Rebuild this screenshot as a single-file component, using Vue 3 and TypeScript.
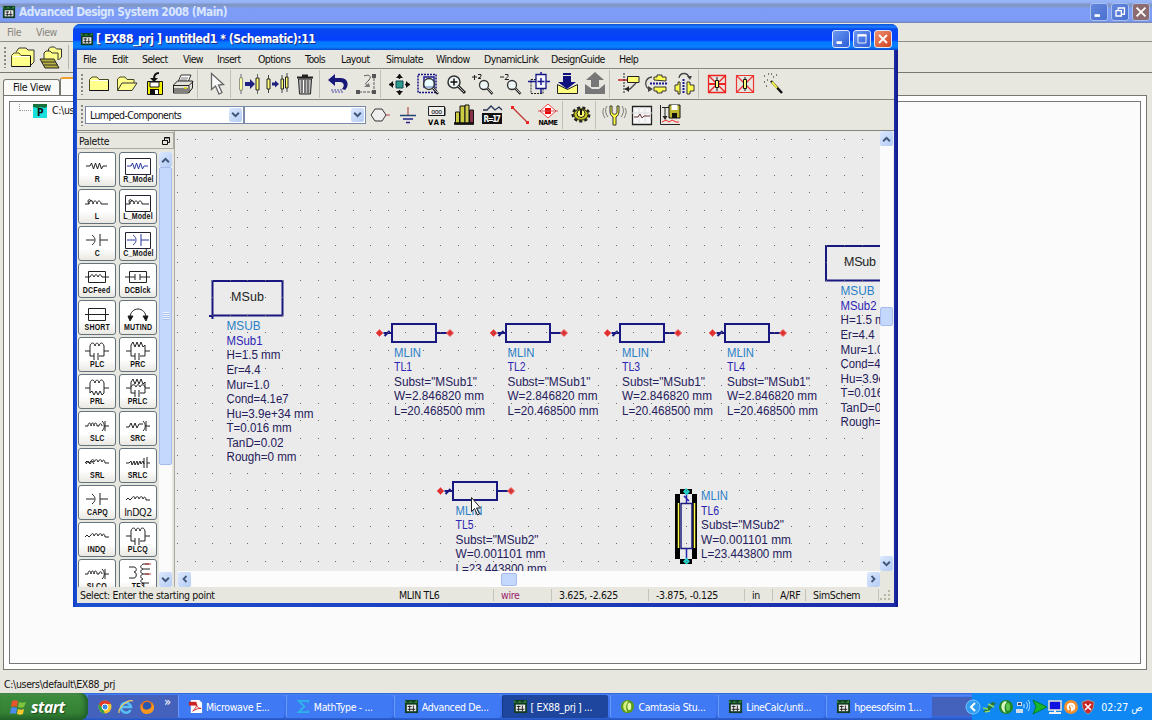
<script setup lang="ts">
import { computed } from "vue";

defineOptions({ name: "SchematicDesktop" });

interface Mlin {
    name: string;
    x: number;
    y: number;
    textX: number;
    textY: number;
    subst: string;
    w: string;
    l: string;
}

interface TextLine {
    text: string;
    width: number;
    kind: "type" | "id" | "param";
}

const FOLDER = '<path d="M4.5 20.5V9.5L7 7h5l2 2.5h9.5v11z" fill="#ffff8c" stroke="#4a4a20"/><path d="M6 10.5h17" stroke="#fff"/><path d="M4.5 20.5h19V10" fill="none" stroke="#111"/>';
const GLASS = '<circle cx="13" cy="12" r="6" fill="#eef6f6" stroke="#333" stroke-width="1.5"/><path d="M17 16l7 7" stroke="#222" stroke-width="3"/><path d="M17 16l6 6" stroke="#bbb"/>';
const SMALL_GLASS = '<circle cx="15" cy="15" r="4.5" fill="#eef6f6" stroke="#333" stroke-width="1.3"/><path d="M18.500 18.500l5 5.500" stroke="#222" stroke-width="2.500"/><path d="M18.500 18.500l5 5" stroke="#bbb"/>';
const FLOPPY = '<path d="M6.500 11.500h15v13h-15z" fill="#f4f000" stroke="#111"/><path d="M9 12h9v5H9z" fill="#fff" stroke="#111"/><path d="M9 19h9v5H9z" fill="#111"/><path d="M14 20h3v4h-3z" fill="#fff"/>';

const icons: Record<string, string> = {
    folder: FOLDER,
    folderOpen: '<path d="M4.500 20.500V9L7 7h5l2 2.500h7V13" fill="#ffff8c" stroke="#4a4a20"/><path d="M4.500 20.500L9 13h15l-5 7.500z" fill="#ffff8c" stroke="#333"/>',
    save: FLOPPY + '<path d="M18 3c-4 0-5 2-5 6" fill="none" stroke="#111" stroke-width="2"/><path d="M9 8h8l-4 4z" fill="#111"/>',
    print: '<path d="M9 12l3-7h10l-3 7z" fill="#fff" stroke="#333"/><path d="M12 8h7M11 10h7" stroke="#777"/><path d="M4.500 15l4-4h15v7l-4 5h-15z" fill="#e3e0d8" stroke="#222"/><path d="M4 15.500h16l4-4M20 15.500V23M5 19h14M5 21h14" fill="none" stroke="#222"/><path d="M15 18h3" stroke="#dd0" stroke-width="1.500"/>',
    select: '<path d="M9.500 3.500v16l4-3.500 3.500 8 3-1.500-3.500-7.500 5-.5z" fill="#fafafa" stroke="#666" stroke-width="1.300"/>',
    stepOne: '<path d="M4.500 8h3v12h-3z" fill="#ffffa0" stroke="#998"/><path d="M21 8h3v12h-3z" fill="#ffff70" stroke="#222"/><path d="M22.500 4v4M22.500 20v4M6 4v4M6 20v4" stroke="#666"/><path d="M10 12h5v-3l5 5-5 5v-3h-5z" fill="#202080"/>',
    stepMany: '<path d="M4 9h3v10H4zM18 9h2.500v10H18zM22.500 7h2.500v11h-2.500z" fill="#ffff70" stroke="#222"/><path d="M5.500 5v4M5.500 19v4M19 5v4M19 19v4M24 3v4M24 18v4" stroke="#444"/><path d="M9 12.500h3v-2l4 3.500-4 3.500v-2H9z" fill="#202080"/>',
    trash: '<path d="M7.500 9h13l-1 15h-11z" fill="#bbb" stroke="#222"/><path d="M6 7.500h16M11 5.500h6" stroke="#222" stroke-width="2"/><path d="M11 10v13M14 10v13M17 10v13" stroke="#333"/><path d="M12.500 10v13" stroke="#fff"/>',
    undo: '<path d="M4 10l7-6v4h6c8 0 8 9 4 12l-3-1c3-3 2-7-2-7h-5v4z" fill="#181878"/><path d="M7 20h12M8 22h11" stroke="#7c7cb8" stroke-width="1.300" stroke-dasharray="2 1"/>',
    reroute: '<path d="M7 22h13M22 8v12" stroke="#888" stroke-width="1.500" stroke-dasharray="3 1"/><path d="M4 20h4v4H4zM20 20h4v4h-4zM20 4h4v4h-4z" fill="#555"/><path d="M12 6c5-2 8 0 5 4-3 3-5 4-1 6" fill="none" stroke="#555"/><path d="M12 17h6l-1-4z" fill="#777"/>',
    viewAll: '<path d="M11 11h7v7h-7z" fill="#2c9c8c" stroke="#145"/><path d="M11 8h7l-3.500-4zM11 21h7l-3.500 4zM8 11v7l-4-3.500zM21 11v7l4-3.500z" fill="#111"/><path d="M14.500 4v5M14.500 20v5M4 14.500h5M20 14.500h5" stroke="#111" stroke-width="1.500"/>',
    zoomArea: '<path d="M5 4.500h18v18H5z" fill="none" stroke="#161680" stroke-width="1.500" stroke-dasharray="2 1"/><path d="M11 7h10v10H11z" fill="#fff" stroke="#181890" stroke-width="1.500"/><circle cx="16" cy="14" r="5.500" fill="#dff" fill-opacity=".6" stroke="#333" stroke-width="1.300"/><path d="M20 18l5 6" stroke="#222" stroke-width="2.500"/><path d="M20 18l5 5" stroke="#bbb"/>',
    zoomPoint: GLASS + '<path d="M9.500 12h7M13 8.500v7" stroke="#111" stroke-width="1.500"/>',
    zoomIn: SMALL_GLASS + '<path d="M3 7h5M5.500 5v5M9 4.500h3v2l-3 2h3" fill="none" stroke="#222"/>',
    zoomOut: SMALL_GLASS + '<path d="M3 7h4M8 4.500h3v2l-3 3h4" fill="none" stroke="#222"/>',
    pan: '<path d="M6 9.500h12v14H6z" fill="none" stroke="#222" stroke-dasharray="2 1"/><path d="M11 4.500h10v14H11z" fill="#f8f8ff" stroke="#161680" stroke-width="1.300"/><path d="M16 8v7M12.500 11.500h7M3 11.500h8M21 11.500h4M16 2v3M16 19v4" stroke="#181890" stroke-width="1.500"/>',
    push: '<path d="M4.500 14.500l10 5 10-5v9h-20z" fill="#ffff80" stroke="#222"/><path d="M10 3h8v2h-8zM10 6h8v6h5l-9 7-9-7h5z" fill="#10107c"/>',
    pop: '<path d="M4 14l7 5h7l6-5v10H4z" fill="#777"/><path d="M14 2l9 8h-5v7h-8v-7H5z" fill="#777"/>',
    axes: '<path d="M4 10h10" stroke="#c22" stroke-width="1.300"/><path d="M10 3v21" stroke="#222" stroke-dasharray="2 1"/><path d="M13.500 6.500H25v6H13.500z" fill="#ffff70" stroke="#222"/><path d="M11 19h5l6-6" fill="none" stroke="#444" stroke-width="1.300"/><path d="M15 16l-4 3 4 3z" fill="#222"/>',
    mirrorX: '<path d="M12 10V7h3V5h5v2h4v4zM12 17v4h3v2h5v-2h4v-4z" fill="#ffff50" stroke="#333"/><path d="M8 13.500h17" stroke="#181890" stroke-width="2" stroke-dasharray="2 1"/><path d="M10 7c-8 1-8 11-2 12" fill="none" stroke="#444" stroke-width="1.300"/><path d="M6 16l5 3-5 3z" fill="#444"/>',
    mirrorY: '<path d="M10 12v12H8v-3H5v-6h3v-3zM17 12v12h3v-3h4v-6h-4v-3z" fill="#ffff50" stroke="#333"/><path d="M13.500 9v15" stroke="#181890" stroke-width="2" stroke-dasharray="2 1"/><path d="M9 8c1-6 9-6 10 0" fill="none" stroke="#444" stroke-width="1.300"/><path d="M17 6h5l-2 4z" fill="#444"/>',
    deactivate: '<path d="M5.500 5.500h17v17h-17zM5.500 5.500l17 17M22.500 5.500l-17 17" fill="none" stroke="#e22" stroke-width="1.300"/><path d="M5 14h18" stroke="#e22" stroke-width="2"/><path d="M12.500 10.500h3v7h-3z" fill="#ffff80" stroke="#111"/><path d="M14 7v3M14 18v3" stroke="#111"/>',
    shortOut: '<path d="M5.500 5.500h17v17h-17zM5.500 5.500l17 17M22.500 5.500l-17 17" fill="none" stroke="#e33" stroke-width="1.200"/><path d="M12.500 9.500h3v9h-3z" fill="#ffff80" stroke="#111"/><path d="M14 7v3M14 18v3" stroke="#111"/>',
    wand: '<path d="M12 11l11 12" stroke="#111" stroke-width="2.500"/><path d="M13 12l5 6" stroke="#ee4" stroke-width="2"/><path d="M5 6h1M9 4h1M14 7h1M5 12h1M8 10h1M7 16h1M12 4h1M17 5h1" stroke="#555" stroke-width="1.500"/>',
    port: '<path d="M5 14l4-6h7l4 6-4 6H9z" fill="#eee" stroke="#333"/><path d="M20 14h4" stroke="#b44"/>',
    ground: '<path d="M14 6v8" stroke="#a33"/><path d="M6 14.500h16" stroke="#247" stroke-width="1.500"/><path d="M9 18h10M12 21.500h4" stroke="#228" stroke-width="1.500"/>',
    variable: '<path d="M6.500 5.500h16v9h-16z" fill="#eee" stroke="#222"/><path d="M8 14.500h15v-8" fill="none" stroke="#111"/><text x="14.500" y="12.500" font-size="7" text-anchor="middle">ooo</text><text x="14.500" y="24" font-size="7.500" font-weight="bold" text-anchor="middle" textLength="17">VAR</text>',
    library: '<path d="M5.500 11h4v12h-4zM10 5h5v18h-5z" fill="#cccc40" stroke="#111"/><path d="M15 4h4v19h-4z" fill="#cccc50" stroke="#111"/><path d="M19.500 9h4v14h-4z" fill="#883048" stroke="#111"/><path d="M4 22.500h20" stroke="#111" stroke-width="2.500"/>',
    tuneVar: '<path d="M5 9h4l4-4 4 4 4-3 3 3" fill="none" stroke="#235" stroke-width="1.300"/><path d="M4 12h20v11H4z" fill="#111"/><text x="14" y="21" font-size="8" fill="#fff" font-weight="bold" text-anchor="middle" textLength="17">R=17</text>',
    wire: '<path d="M7 7l14 14" stroke="#b33" stroke-width="1.200"/><path d="M5 5h3v3H5zM20 20h3v3h-3z" fill="#e22"/>',
    wireName: '<path d="M14 3l8 7-8 7-8-7z" fill="#fff" stroke="#e44"/><path d="M11 7h6v6h-6z" fill="#e00"/><path d="M4 10h20" stroke="#c55"/><text x="14" y="24" font-size="7" font-weight="bold" text-anchor="middle" textLength="19">NAME</text>',
    simulate: '<ellipse cx="14" cy="13.500" rx="8" ry="6.500" fill="#c4c400" stroke="#222" stroke-width="3" stroke-dasharray="3 2"/><ellipse cx="14" cy="13.500" rx="7" ry="5.500" fill="#c4c420" stroke="#333"/><circle cx="14" cy="12.500" r="4" fill="#ffff70" stroke="#222"/><path d="M14 8v6" stroke="#111" stroke-width="2"/>',
    tune: '<path d="M10 5v5c0 3 1 5 3 6v8h3v-8c2-1 3-3 3-6V5h-2v6c0 3-5 3-5 0V5z" fill="#ffff40" stroke="#333"/><path d="M7 5c-2 3-2 7 1 11M4 7c-2 3-1 7 1 10M22 5c2 3 2 7-1 11M25 7c2 3 1 7-1 10" fill="none" stroke="#777"/>',
    display: '<path d="M4.500 5.500h19v18h-19z" fill="#f6f6f6" stroke="#222" stroke-width="1.300"/><path d="M4 12h20M11 6v17M17 6v17" stroke="#ddd"/><path d="M6 16h4l2-3 2 4 2-2h6" fill="none" stroke="#633"/>',
    dataSave: '<path d="M4.500 4v19.500H24" fill="none" stroke="#222"/><path d="M6 6.500h8M9 7v10" stroke="#222"/><path d="M6.500 15h5l-2.500 4z" fill="#222"/><path d="M13 4h11v13H13z" fill="#bdb830" stroke="#111"/><path d="M15.500 4h6v5h-6z" fill="#fff"/><path d="M16 12h5v5h-5z" fill="#111"/><path d="M6 21l4-2 3 2 3-2 4 2h3" fill="none" stroke="#e22"/>',
};

const toolbar: string[][] = [
    ["folder", "folderOpen", "save", "print"],
    ["select"],
    ["stepOne", "stepMany", "trash"],
    ["undo", "reroute"],
    ["viewAll", "zoomArea", "zoomPoint", "zoomIn", "zoomOut", "pan", "push", "pop"],
    ["axes", "mirrorX", "mirrorY"],
    ["deactivate", "shortOut", "wand"],
];

const insertBar: string[][] = [
    ["port", "ground", "variable", "library", "tuneVar", "wire", "wireName"],
    ["simulate"],
    ["tune", "display", "dataSave"],
];

const menus = ["File", "Edit", "Select", "View", "Insert", "Options", "Tools", "Layout", "Simulate", "Window", "DynamicLink", "DesignGuide", "Help"];

// palette glyphs, drawn on a 34x22 box with the centre line at y=11
const ZIG = '<path d="M6 11h4l1.500-3 2 6 2-6 2 6 2-6 2 6 1.500-3h4"/>';
const COIL = '<path d="M5 12h4c0-5 4-5 4 0 0-4 4-4 4 0 0-4 4-4 4 0h7"/><path d="M9 12c-3-5 2-6 2-2"/>';
const CAP = '<path d="M6 11h8M12 6c4 3 4 7 0 10M20 5v12M20 11h8"/>';
const TANK = '<path d="M5 11h5M24 11h5M10 6v10h4M24 6v10h-5M14 13v7M18 13v7M10 6c1-4 4-4 5 0 1-4 3-4 4 0 1-4 4-4 5 0"/>';
const RTANK = '<path d="M5 11h5M24 11h5M10 5v11h4M24 5v11h-5M14 13v7M18 13v7M10 5l2-3 2 5 2-5 2 5 2-5 2 5 2-2"/>';
const SERIES = '<path d="M5 12h3c0-4 3-4 3 0 0-4 3-4 3 0 0-4 3-4 3 0h2c0-3 3-3 3 0M22 7c3 3 3 7 0 10M25 7v10M25 12h4"/>';
const WAVE = '<path d="M5 12l2-2 2 2 2-2c1-2 3-2 3 1 1-3 4-3 4 0 1-3 4-3 4 0 1-3 3-2 3 1h4"/>';
const BOX = '<path d="M4.500 3.500h25v16h-25z" stroke="#223"/>';

const palette = [
    { label: "R", glyph: ZIG },
    { label: "R_Model", glyph: BOX + ZIG, blue: true },
    { label: "L", glyph: COIL },
    { label: "L_Model", glyph: BOX + COIL },
    { label: "C", glyph: CAP },
    { label: "C_Model", glyph: BOX + CAP, blue: true },
    { label: "DCFeed", glyph: '<path d="M8.500 5.500h17v11h-17zM5 11h5c1-3 3-3 4 0 1-3 3-3 4 0 1-3 3-3 4 0h7"/>' },
    { label: "DCBlck", glyph: '<path d="M8.500 5.500h17v11h-17zM4 11h10M14 8v6M19 8v6M19 11h10"/>' },
    { label: "SHORT", glyph: '<path d="M8.500 5.500h17v12h-17zM5 11.500h24"/>' },
    { label: "MUTIND", glyph: '<path d="M9 15c0-12 16-12 16 0"/><path d="M7 13h5l-3 5zM22 13h5l-2 5z" fill="#111"/>' },
    { label: "PLC", glyph: TANK },
    { label: "PRC", glyph: RTANK },
    { label: "PRL", glyph: '<path d="M5 11h5M24 11h5M10 6v10M24 6v10M10 6c1-4 4-4 5 0 1-4 3-4 4 0 1-4 4-4 5 0M10 16l2-2 2 4 2-4 2 4 2-4 2 4 2-2"/>' },
    { label: "PRLC", glyph: RTANK + '<path d="M10 10c1-3 4-3 5 0 1-3 3-3 4 0 1-3 4-3 5 0"/>' },
    { label: "SLC", glyph: SERIES },
    { label: "SRC", glyph: '<path d="M5 13h3l2-4 2 5 2-5 2 5 2-4h4M22 7c3 3 3 7 0 10M25 7v10M25 12h4"/>' },
    { label: "SRL", glyph: WAVE + '<path d="M6 13l2-3 2 3 2-3 2 3"/>' },
    { label: "SRLC", glyph: '<path d="M5 12h3l2-2 1 4 2-4 1 4 2-4 1 4 2-4 1 3 2-3 1 3M23 7v10M26 6v11M26 12h3"/>' },
    { label: "CAPQ", glyph: CAP },
    { label: "InDQ2", glyph: WAVE, plain: true },
    { label: "INDQ", glyph: WAVE },
    { label: "PLCQ", glyph: TANK },
    { label: "SLCQ", glyph: SERIES },
    { label: "TF3", glyph: '<path d="M8 5h5c3 0 3 5 0 5 3 0 3 6 0 6H8M28 2h-6c-3 2-3 4 0 5-3 1-3 4 0 5-3 1-3 4 0 5-3 1-3 3 0 4h6M22 7h7M22 12h6"/><path d="M24 2h6M24 12h6" stroke="#b33"/>' },
];

// schematic grid
const GRID_STEP = 17.55;
const gridDots = computed(() => {
    let d = "";
    for (let row = 0; row < 25; row++) {
        for (let col = 0; col < 40; col++) {
            d += `M${Math.round(177.1 + col * GRID_STEP)} ${Math.round(139.4 + row * GRID_STEP)}h1v1h-1z`;
        }
    }
    return d;
});

const lines: Mlin[] = [
    { name: "TL1", x: 379.5, y: 333, textX: 394, textY: 356.5, subst: "MSub1", w: "2.846820", l: "20.468500" },
    { name: "TL2", x: 493.5, y: 333, textX: 507.5, textY: 356.5, subst: "MSub1", w: "2.846820", l: "20.468500" },
    { name: "TL3", x: 607.5, y: 333, textX: 622, textY: 356.5, subst: "MSub1", w: "2.846820", l: "20.468500" },
    { name: "TL4", x: 712.5, y: 333, textX: 727, textY: 356.5, subst: "MSub1", w: "2.846820", l: "20.468500" },
    { name: "TL5", x: 440.5, y: 491, textX: 455.5, textY: 514.5, subst: "MSub2", w: "0.001101", l: "23.443800" },
    { name: "TL6", x: 0, y: 0, textX: 701, textY: 500, subst: "MSub2", w: "0.001101", l: "23.443800" },
];

const horizontalLines = computed(() => lines.filter((line) => line.x > 0));

function mlinText(line: Mlin): TextLine[] {
    return [
        { text: "MLIN", width: 27, kind: "type" },
        { text: line.name, width: 18, kind: "id" },
        { text: `Subst="${line.subst}"`, width: 83, kind: "param" },
        { text: `W=${line.w} mm`, width: 90, kind: "param" },
        { text: `L=${line.l} mm`, width: 91, kind: "param" },
    ];
}

function msubText(name: string): TextLine[] {
    return [
        { text: "MSUB", width: 34, kind: "type" },
        { text: name, width: 36, kind: "id" },
        { text: "H=1.5 mm", width: 54, kind: "param" },
        { text: "Er=4.4", width: 34, kind: "param" },
        { text: "Mur=1.0", width: 43, kind: "param" },
        { text: "Cond=4.1e7", width: 62, kind: "param" },
        { text: "Hu=3.9e+34 mm", width: 87, kind: "param" },
        { text: "T=0.016 mm", width: 65, kind: "param" },
        { text: "TanD=0.02", width: 57, kind: "param" },
        { text: "Rough=0 mm", width: 70, kind: "param" },
    ];
}

const textBlocks = computed(() => [
    { x: 226.5, y: 330.2, rows: msubText("MSub1") },
    { x: 840.5, y: 295.2, rows: msubText("MSub2") },
    ...lines.map((line) => ({ x: line.textX, y: line.textY, rows: mlinText(line) })),
]);

const ADS = '<path d="M1 1h14v14H1z" fill="#123c24"/><path d="M1 1l3 3 3-2 3 2 4-3v3H1z" fill="#2f8c3c"/><path d="M3 6h10v7H3z" fill="#e8e8e8"/><path d="M4 8h4M4 11h8M6 7v6M10 7v6" stroke="#222"/>';

const tasks = [
    { label: "Microwave E...", icon: '<path d="M3 1h9l3 3v11H3z" fill="#fff"/><path d="M1 3h8v4H1z" fill="#c22"/><path d="M5 13c3-3 5-6 4-8 0 4 3 5 5 5-4 0-6 1-9 3z" fill="none" stroke="#c22"/>' },
    { label: "MathType - ...", icon: '<path d="M13 4V2H3l6 6-6 6h10v-2" fill="none" stroke="#2fb4ea" stroke-width="2"/>' },
    { label: "Advanced De...", icon: ADS },
    { label: "[ EX88_prj ] ...", icon: ADS, active: true },
    { label: "Camtasia Stu...", icon: '<circle cx="8" cy="8" r="7" fill="#5a9c18"/><path d="M7 2c-5 2-5 10 1 12-2-4-2-8 1-11z" fill="#d8f080"/><ellipse cx="10" cy="8" rx="2" ry="4" fill="#e8f8b0"/>' },
    { label: "LineCalc/unti...", icon: ADS },
    { label: "hpeesofsim 1...", icon: ADS },
];
</script>

<template>
    <div class="desktop">
        <!-- main project window -->
        <section class="main-window">
            <header class="main-title">
                <svg class="app-icon" viewBox="0 0 16 16" v-html="ADS" />
                <span class="main-title-text">Advanced Design System 2008 (Main)</span>
                <div class="window-buttons faded">
                    <i class="wb"><svg viewBox="0 0 18 18"><path d="M4 13h6" stroke="#fff" stroke-width="3" /></svg></i>
                    <i class="wb"><svg viewBox="0 0 18 18"><path d="M7 7V4.500h7v7h-3M4.500 7.500h6v6h-6z" fill="none" stroke="#fff" stroke-width="1.500" /></svg></i>
                    <i class="wb close"><svg viewBox="0 0 18 18"><path d="M4 4l10 10M14 4L4 14" stroke="#fff" stroke-width="2" /></svg></i>
                </div>
            </header>
            <nav class="main-menu"><span>File</span><span>View</span></nav>
            <div class="main-tools">
                <i class="grip" />
                <svg viewBox="0 0 28 28"><g transform="translate(1 -1)"><path d="M7 10l3-4h7l2 2h6v12l-3 3" fill="#ffff8c" stroke="#333" /></g><g transform="translate(-1 3)" v-html="FOLDER" /></svg>
                <svg viewBox="0 0 28 28"><path d="M12.500 11V6l2-2h4l2 2h5v8l-3 3" fill="#ffff8c" stroke="#333" /><path d="M8 17v-7l2-2h4l2 2h6v7" fill="#ffff8c" stroke="#333" /><path d="M4 16h14l5 9H9z" fill="#b8b040" stroke="#222" /><path d="M6 19h14M8 22h14" stroke="#333" /></svg>
                <i class="sep" />
            </div>
            <div class="tabs"><span class="tab">File View</span><span class="tab selected" /></div>
            <div class="main-panel">
                <div class="tree">
                    <i class="tree-line" />
                    <span class="tree-icon"><svg viewBox="0 0 14 14"><path d="M0 0h14v14H0z" fill="#19e0dc" /><path d="M0 0h14v3l-3 1-3-1-3 1-5-1z" fill="#18703c" /></svg><b>P</b></span>
                    <span>C:\users</span>
                </div>
            </div>
            <footer class="main-status">C:\users\default\EX88_prj</footer>
        </section>

        <!-- schematic window -->
        <section class="schematic">
            <header class="title">
                <svg class="app-icon" viewBox="0 0 16 16" v-html="ADS" />
                <span class="title-text">[ EX88_prj ] untitled1 * (Schematic):11</span>
                <div class="window-buttons">
                    <i class="wb"><svg viewBox="0 0 18 18"><path d="M4 13h6" stroke="#fff" stroke-width="3" /></svg></i>
                    <i class="wb"><svg viewBox="0 0 18 18"><path d="M4.500 4.500h9v9h-9z" fill="none" stroke="#fff" /><path d="M4 5h10" stroke="#fff" stroke-width="2.500" /></svg></i>
                    <i class="wb close"><svg viewBox="0 0 18 18"><path d="M4.500 4.500l9 9M13.500 4.500l-9 9" stroke="#fff" stroke-width="2" /></svg></i>
                </div>
            </header>
            <div class="body">
                <nav class="menu"><span v-for="item in menus" :key="item">{{ item }}</span></nav>
                <div class="tools">
                    <i class="grip" />
                    <div v-for="(group, g) in toolbar" :key="g" class="group">
                        <svg v-for="name in group" :key="name" viewBox="0 0 28 28" v-html="icons[name]" />
                    </div>
                </div>
                <div class="tools">
                    <i class="grip" />
                    <div class="combo wide"><span>Lumped-Components</span><i class="drop"><svg viewBox="0 0 8 6"><path d="M1 1l3 3 3-3" /></svg></i></div>
                    <div class="combo"><span /><i class="drop"><svg viewBox="0 0 8 6"><path d="M1 1l3 3 3-3" /></svg></i></div>
                    <div v-for="(group, g) in insertBar" :key="g" class="group">
                        <svg v-for="name in group" :key="name" viewBox="0 0 28 28" v-html="icons[name]" />
                    </div>
                </div>
                <div class="work">
                    <aside class="palette">
                        <div class="palette-head">
                            <span>Palette</span>
                            <svg viewBox="0 0 8 8"><path d="M2.500 3V.5h5v5H6M.5 3.500h5v4h-5z" fill="none" stroke="#111" /><path d="M2 1h6M0 3.500h6" stroke="#111" /></svg>
                        </div>
                        <div class="palette-body">
                            <div class="cells">
                                <div v-for="item in palette" :key="item.label" class="cell">
                                    <svg viewBox="0 0 34 22" :class="{ blue: item.blue }" v-html="item.glyph" />
                                    <span :class="{ plain: item.plain }">{{ item.label }}</span>
                                </div>
                            </div>
                            <div class="vbar">
                                <i class="arrow"><svg viewBox="0 0 8 6"><path d="M1 5l3-3 3 3" /></svg></i>
                                <i class="thumb palette-thumb"><b /></i>
                                <i class="arrow end"><svg viewBox="0 0 8 6"><path d="M1 1l3 3 3-3" /></svg></i>
                            </div>
                        </div>
                    </aside>
                    <div class="view">
                        <svg class="canvas" viewBox="175 131 705 440">
                            <g class="part">
                                <path d="M212.500 281h70v34.500h-70zM209 316h4M212.500 313v6" />
                                <path d="M826 246h70v34.500h-70z" />
                            </g>
                            <text class="msub" x="231" y="301.200" textLength="33">MSub</text>
                            <text class="msub" x="844" y="266.200" textLength="32">MSub</text>
                            <g v-for="line in horizontalLines" :key="line.name" :transform="`translate(${line.x} ${line.y})`">
                                <path class="part" d="M12.500 -9h44v18h-44zM4 0h8.500M56.500 0h11M5 3l5 -5" />
                                <path class="pin" d="M-3.500 0l3.500 -3.500 3.500 3.500 -3.500 3.500zM67 0l3.500 -3.500 3.500 3.500 -3.500 3.500z" />
                            </g>
                            <!-- selected TL6 -->
                            <path d="M675 494h5v-5h12v5h5v65h-5v5h-12v-5h-5z" fill="#000" />
                            <path d="M680 493h12v67h-12z" fill="#ebebeb" />
                            <path d="M678.500 503v45M694.500 503v45" stroke="#ffff50" stroke-width="1.500" />
                            <path d="M681 503.500h11v45h-11z" fill="#ebebeb" stroke="#1c1c80" stroke-width="1.500" />
                            <path d="M686.500 493v10M686.500 549v11M684 496l5 5" stroke="#2424b0" stroke-width="1.500" />
                            <path d="M680 489h12v5h-12zM680 559h12v5h-12z" fill="#000" />
                            <path d="M683 491.500l3-3.500 4 3.500-3.500 4zM683 561.500l3.500-4 3.500 4-3.500 3z" fill="#20d0c8" />
                            <g v-for="(block, b) in textBlocks" :key="b">
                                <text
                                    v-for="(row, r) in block.rows"
                                    :key="r"
                                    :class="row.kind"
                                    :x="block.x"
                                    :y="block.y + r * 14.58"
                                    :textLength="row.width"
                                    lengthAdjust="spacingAndGlyphs"
                                >{{ row.text }}</text>
                            </g>
                            <path :d="gridDots" fill="#686868" shape-rendering="crispEdges" />
                            <path d="M471.500 497.500v14l3-3 3 6.500 2-1-3-6h4z" fill="#fff" stroke="#222" />
                        </svg>
                        <div class="vbar">
                            <i class="arrow"><svg viewBox="0 0 8 6"><path d="M1 5l3-3 3 3" /></svg></i>
                            <i class="thumb canvas-thumb" />
                            <i class="arrow end"><svg viewBox="0 0 8 6"><path d="M1 1l3 3 3-3" /></svg></i>
                        </div>
                        <div class="hbar">
                            <i class="arrow"><svg viewBox="0 0 6 8"><path d="M5 1L2 4l3 3" /></svg></i>
                            <i class="thumb hthumb" />
                            <i class="arrow"><svg viewBox="0 0 6 8"><path d="M1 1l3 3-3 3" /></svg></i>
                        </div>
                        <i class="corner" />
                    </div>
                </div>
                <footer class="status">
                    <span>Select: Enter the starting point</span>
                    <span>MLIN TL6</span>
                    <span class="wire">wire</span>
                    <span>3.625, -2.625</span>
                    <span>-3.875, -0.125</span>
                    <span>in</span>
                    <span>A/RF</span>
                    <span>SimSchem</span>
                    <svg viewBox="0 0 12 12"><path d="M9 1h2v2H9zM9 5h2v2H9zM9 9h2v2H9zM5 5h2v2H5zM5 9h2v2H5zM1 9h2v2H1z" fill="#b9b6a4" /></svg>
                </footer>
            </div>
        </section>

        <!-- taskbar -->
        <footer class="taskbar">
            <div class="start">
                <svg viewBox="0 0 18 18"><path d="M3 3c2-1 4-1 6 0L8 9C6 8 4 8 2 9z" fill="#e8552c" /><path d="M10 4c2 1 4 1 7 0l-2 5c-2 1-4 1-6 0z" fill="#7fc43c" /><path d="M2 10c2-1 4-1 6 0l-1 6c-2-1-4-1-6 0z" fill="#4a8cf0" /><path d="M9 11c2 1 4 1 6 0l-1 5c-2 1-4 1-6 0z" fill="#f8c830" /></svg>
                <span>start</span>
            </div>
            <div class="quick">
                <svg viewBox="0 0 16 16"><circle cx="8" cy="8" r="6.500" fill="#f4c430" /><path d="M2 5a7 7 0 0 1 12 0H8L5 9z" fill="#e03828" /><path d="M2 5l4 5 2 4.500A7 7 0 0 1 2 5z" fill="#30a048" /><circle cx="8" cy="8" r="3" fill="#3888e8" stroke="#fff" /></svg>
                <svg viewBox="0 0 16 16"><path d="M12.500 11A5 5 0 1 1 13 8H4" fill="none" stroke="#58c0f4" stroke-width="2.500" /><path d="M1 14C0 9 9 0 15 2" fill="none" stroke="#f4d060" stroke-width="1.200" /></svg>
                <svg viewBox="0 0 16 16"><circle cx="8" cy="8" r="6.500" fill="#e8701c" /><circle cx="8" cy="7" r="4" fill="#2858b0" /><path d="M2 4c0 5 3 8 8 6 3-1 4-4 3-7 5 7 0 12-5 12S0 10 2 4z" fill="#f89820" /></svg>
                <b>»</b>
            </div>
            <div class="tasks">
                <div v-for="task in tasks" :key="task.label" class="task" :class="{ active: task.active }">
                    <svg viewBox="0 0 16 16" v-html="task.icon" />
                    <span>{{ task.label }}</span>
                </div>
            </div>
            <div class="lang" />
            <div class="tray">
                <svg viewBox="0 0 16 16"><circle cx="8" cy="8" r="7" fill="#2e9cf0" stroke="#7cc4ff" /><path d="M10 4L6 8l4 4" fill="none" stroke="#fff" stroke-width="2" /></svg>
                <svg viewBox="0 0 16 16"><path d="M2 13l9-10 4 1-8 9z" fill="#287838" /><path d="M2 9l5 1M7 5l6 3M4 13l5-1" stroke="#8cd870" stroke-width="1.500" /></svg>
                <svg viewBox="0 0 16 16"><circle cx="8" cy="8" r="7" fill="#208828" /><path d="M7 2c-5 2-5 10 1 12-2-4-2-8 1-11z" fill="#d8f8c0" /><ellipse cx="10" cy="8" rx="2" ry="4" fill="#60c850" /></svg>
                <svg viewBox="0 0 16 16"><path d="M3 3h5v4H3zM2 10h7v4H2z" fill="#d0dce8" /><path d="M4 4h3v2H4z" fill="#347" /><path d="M10 5v4M12 3c2 2 2 5 0 7M14 1c3 4 2 8 0 11" fill="none" stroke="#b8e8ff" /></svg>
                <svg viewBox="0 0 16 16"><path d="M2 1l14 7L2 15l3-7z" fill="#18b828" stroke="#073" /></svg>
                <svg viewBox="0 0 16 16"><path d="M2 2h12v9H2z" fill="#1010e0" stroke="#f0e8d0" stroke-width="1.500" /><path d="M2 14h12M8 11v3" stroke="#eee" stroke-width="2" /></svg>
                <svg viewBox="0 0 16 16"><circle cx="8" cy="8" r="7" fill="#f09030" /><path d="M6 11c-3-4 0-7 3-6s3 5 0 6c0-3 0-4-2-4" fill="none" stroke="#fff" stroke-width="2" /></svg>
                <svg viewBox="0 0 16 16"><path d="M2 3l6-2 6 2c0 6-2 10-6 12C4 13 2 9 2 3z" fill="#c82828" stroke="#999" /><path d="M5 5l6 6M11 5l-6 6" stroke="#fff" stroke-width="1.500" /></svg>
                <time>02:27 ص</time>
            </div>
        </footer>
    </div>
</template>

<style>
body {
    overflow: hidden;
}
</style>

<style scoped>
.desktop {
    position: relative;
    display: flex;
    flex-direction: column;
    width: 1152px;
    height: 720px;
    overflow: hidden;
    background: #e8e7df;
    color: #111;
    font: 10.5px "DejaVu Sans Condensed", "DejaVu Sans", "Noto Sans", sans-serif;
    font-stretch: condensed;
    letter-spacing: -0.35px;
    white-space: nowrap;
}

.desktop * {
    box-sizing: border-box;
}

svg {
    display: block;
    flex: none;
    overflow: hidden;
}

/* main window */
.main-window {
    display: flex;
    flex-direction: column;
    height: 693px;
}

.main-title {
    display: flex;
    align-items: center;
    height: 23px;
    padding: 1px 2px 0 2px;
    background: linear-gradient(#9ab8f6 0, #92b0f4 3px, #8097c4 4px, #8098cc 7px, #7d9df5 8px, #7c9cf8 20px, #7890dc 22px, #75809c 23px);
}

.app-icon {
    width: 14px;
    height: 14px;
}

.main-title-text {
    flex: 1;
    margin-left: 3px;
    color: #d9e6fc;
    font-size: 11.8px;
    font-weight: bold;
    letter-spacing: -0.55px;
}

.window-buttons {
    display: flex;
    gap: 3px;
}

.wb {
    width: 18px;
    height: 18px;
    border: 1px solid #dce8fc;
    border-radius: 3px;
    background: linear-gradient(135deg, #6c98f0, #2c5cd8);
}

.wb svg {
    width: 16px;
    height: 16px;
}

.wb.close {
    background: linear-gradient(135deg, #ee9070, #d04420);
}

.faded .wb {
    border-color: #a8c0f0;
    background: linear-gradient(135deg, #6488dc, #4a70d0);
}

.faded .wb.close {
    background: #8c6c70;
}

.main-menu {
    display: grid;
    grid-template-columns: 29px 40px;
    align-items: center;
    height: 19px;
    padding-left: 7px;
    border-bottom: 1px solid #8d8d87;
    color: #85857e;
}

.main-tools {
    display: flex;
    align-items: center;
    height: 31px;
    border-bottom: 1px solid #77776f;
    padding-left: 4px;
}

.main-tools svg {
    width: 28px;
    height: 28px;
}

.grip {
    flex: none;
    width: 4px;
    height: 21px;
    background: radial-gradient(circle at 1px 1px, #888 0.8px, transparent 1px) 0 0 / 4px 4px;
}

.sep {
    width: 1px;
    height: 24px;
    margin-left: 4px;
    background: #b5b4aa;
}

.tabs {
    display: flex;
    align-items: flex-end;
    height: 22px;
    padding-left: 3px;
}

.tab {
    width: 57px;
    height: 16px;
    padding: 1px 0 0 9px;
    border: 1px solid #77776f;
    border-bottom: 0;
    border-radius: 3px 3px 0 0;
    background: #fafaf8;
}

.tab.selected {
    height: 18px;
    border-top: 2px solid #f0a030;
}

.main-panel {
    flex: 1;
    margin: 0 5px 0 3px;
    padding: 5px;
    border: 1px solid #77776f;
    background: #fff;
}

.tree {
    display: flex;
    align-items: flex-start;
    height: 100%;
    padding: 2px 0 0 9px;
    border: 1px solid #77777a;
    background: #fbfbfb;
    line-height: 13px;
}

.tree-line {
    width: 12px;
    height: 7px;
    margin-right: 2px;
    border-left: 1px dotted #999;
    border-bottom: 1px dotted #999;
}

.tree-icon {
    position: relative;
    width: 14px;
    height: 14px;
    margin-right: 5px;
}

.tree-icon b {
    position: absolute;
    top: 2px;
    left: 4px;
    font-size: 10px;
}

.main-status {
    height: 23px;
    padding: 8px 0 0 4px;
}

/* schematic window */
.schematic {
    position: absolute;
    top: 24px;
    left: 73px;
    display: flex;
    flex-direction: column;
    width: 825px;
    height: 583px;
    padding: 0 4px 4px;
    border-radius: 7px 7px 0 0;
    background: linear-gradient(90deg, #0c3cc8, #1c50d0 4px, #1c2ca8 821px, #10188c);
    overflow: hidden;
}

.title {
    display: flex;
    align-items: center;
    height: 26px;
    margin: 0 -4px;
    padding: 3px 6px 0 7px;
    background: linear-gradient(#0c50d8 0, #1c80ff 3px, #0848f0 5px, #0440fc 16px, #0478ff 18px, #0880ff 23px, #0848d0 26px);
}

.title-text {
    flex: 1;
    margin-left: 2px;
    color: #fff;
    font-size: 12px;
    font-weight: bold;
    letter-spacing: -0.4px;
    text-shadow: 1px 1px #1c2c88;
}

.body {
    display: flex;
    flex: 1;
    flex-direction: column;
    min-height: 0;
    background: #e8e7df;
}

.menu {
    display: grid;
    grid-template-columns: 29px 30px 41px 34px 41px 47px 36px 45px 50px 48px 67px 68px 40px;
    align-items: center;
    height: 19px;
    padding-left: 6px;
    border-bottom: 1px solid #85857e;
    letter-spacing: -0.6px;
}

.tools {
    display: flex;
    align-items: center;
    height: 31px;
    padding-left: 4px;
    border-bottom: 1px solid #85857e;
}

.group {
    display: flex;
}

.group + .group {
    padding-left: 4px;
    border-left: 1px solid #c0bfb5;
}

.group svg {
    width: 28px;
    height: 28px;
}

.combo {
    display: flex;
    width: 122px;
    height: 18px;
    padding: 1px;
    border: 1px solid #788aa8;
    background: #fff;
    letter-spacing: -0.6px;
    line-height: 14px;
}

.combo span {
    flex: 1;
    padding-left: 3px;
}

.combo.wide {
    width: 159px;
}

.drop,
.arrow {
    display: flex;
    align-items: center;
    justify-content: center;
    width: 13px;
    border-radius: 2px;
    background: linear-gradient(135deg, #dce8fe, #b4ccf4);
}

.drop svg,
.arrow svg {
    width: 9px;
    height: 8px;
    fill: none;
    stroke: #40587c;
    stroke-width: 1.8;
}

.work {
    display: flex;
    height: 456px;
}

.palette {
    display: flex;
    flex-direction: column;
    width: 98px;
    border-right: 1px solid #aaa99f;
}

.palette-head {
    display: flex;
    align-items: center;
    justify-content: space-between;
    height: 17px;
    margin-top: 1px;
    padding: 0 3px 0 2px;
    border: 1px solid #a9a89e;
    border-left: 0;
}

.palette-head svg {
    width: 8px;
    height: 8px;
}

.palette-body {
    display: flex;
    height: 438px;
    padding-top: 3px;
}

.cells {
    display: grid;
    grid-template-columns: 38px 38px;
    grid-auto-rows: 35px;
    gap: 2px 3px;
    width: 82px;
    height: 435px;
    padding-left: 1px;
    overflow: hidden;
}

.cell {
    display: flex;
    flex-direction: column;
    align-items: center;
    border: 1px solid #65747c;
    border-radius: 3px;
    background: linear-gradient(#fff 65%, #e9e8e2);
}

.cell svg {
    width: 34px;
    height: 22px;
    margin-top: 2px;
    fill: none;
    stroke: #222;
    stroke-width: 1;
}

.cell svg.blue {
    stroke: #2838a0;
}

.cell span {
    margin-top: -3px;
    font: bold 9px/11px "Liberation Sans", Arial, sans-serif;
    letter-spacing: 0.2px;
    transform: scaleX(0.78);
}

.cell .plain {
    font: 10.5px/11px "DejaVu Sans Condensed", "DejaVu Sans", sans-serif;
    letter-spacing: -0.35px;
    transform: none;
}

.vbar {
    display: flex;
    flex-direction: column;
    width: 13px;
    background: #fbfbfb;
}

.vbar .arrow {
    height: 15px;
}

.vbar .end {
    margin-top: auto;
}

.thumb {
    border: 1px solid #a6bcec;
    border-radius: 2px;
    background: #c4d8fe;
}

.palette-thumb {
    display: flex;
    align-items: center;
    justify-content: center;
    height: 298px;
}

.palette-thumb b {
    width: 6px;
    height: 8px;
    background: repeating-linear-gradient(#eef4ff 0 1px, #a6c0f0 1px 2px);
}

.view {
    display: grid;
    grid-template: 440px 16px / 705px 14px;
    background: #ebebeb;
}

.canvas {
    width: 705px;
    height: 440px;
    background: #ebebeb;
    font-family: "Liberation Sans", Arial, sans-serif;
    font-size: 12.5px;
    letter-spacing: 0;
}

.part {
    fill: none;
    stroke: #181880;
    stroke-width: 2;
}

.pin {
    fill: #e03030;
    stroke: #ee6a6a;
}

.msub {
    fill: #222;
}

.type {
    fill: #2a7fc8;
}

.id {
    fill: #2c24b4;
}

.param {
    fill: #25205c;
}

.canvas-thumb {
    height: 19px;
    margin-top: 161px;
}

.hbar {
    display: flex;
    align-items: center;
    justify-content: space-between;
    margin-left: 3px;
    background: #fcfcfc;
}

.hbar .arrow {
    height: 15px;
}

.hthumb {
    width: 16px;
    height: 13px;
    margin-right: 40px;
}

.corner {
    background: #e8e7df;
}

.status {
    display: grid;
    flex: 1;
    grid-template-columns: 312px 102px 58px 97px 96px 28px 33px 73px 14px;
    align-items: center;
    padding-left: 3px;
}

.status span {
    height: 12px;
    padding-left: 7px;
    border-right: 1px solid #c4c3b8;
    line-height: 12px;
}

.status span:first-child {
    padding-left: 0;
    border: 0;
}

.status .wire {
    color: #98206c;
}

.status svg {
    width: 12px;
    height: 12px;
}

/* taskbar */
.taskbar {
    display: flex;
    height: 27px;
    background: linear-gradient(#2860d8 0, #5088f8 2px, #3c74f0 5px, #3c74f0 22px, #2454c0 27px);
    color: #fff;
}

.start {
    display: flex;
    flex: none;
    align-items: center;
    width: 88px;
    padding-left: 9px;
    border-radius: 0 8px 8px 0;
    background: linear-gradient(#5ca058 0, #3c8c3c 4px, #348034 20px, #246428);
    box-shadow: inset -3px 0 4px #20602c;
}

.start svg {
    width: 18px;
    height: 18px;
}

.start span {
    margin-left: 4px;
    font: italic bold 15.5px "Open Sans", "Noto Sans", sans-serif;
    letter-spacing: -0.4px;
    text-shadow: 1px 1px 1px #1a4a1c;
}

.quick {
    display: flex;
    flex: none;
    align-items: center;
    gap: 5px;
    width: 90px;
    margin: 2px 0;
    padding-left: 9px;
    background: #4462bc;
}

.quick svg {
    width: 16px;
    height: 16px;
}

.quick b {
    margin: -10px 0 0 4px;
    font-size: 13px;
    font-weight: normal;
}

.tasks {
    display: flex;
    flex: none;
    width: 754px;
    gap: 2px;
}

.task {
    display: flex;
    flex: 1;
    align-items: center;
    min-width: 0;
    margin: 2px 0;
    padding-left: 9px;
    border-left: 1px solid #6a98f8;
    border-radius: 2px;
    background: #4079f4;
}

.task svg {
    width: 15px;
    height: 15px;
    margin-right: 3px;
}

.task.active {
    padding-left: 10px;
    border-color: #163680;
    background: #1e469e;
}

.lang {
    flex: none;
    width: 40px;
    margin: 4px 0;
    background: #4462bc;
}

.tray {
    display: flex;
    flex: 1;
    align-items: center;
    gap: 0.4px;
    margin-left: -7px;
    background: linear-gradient(90deg, transparent 7px, #1088f4 7px);
}

.tray svg {
    width: 16px;
    height: 16px;
}

.tray time {
    margin-left: 5px;
    letter-spacing: -0.5px;
}
</style>
